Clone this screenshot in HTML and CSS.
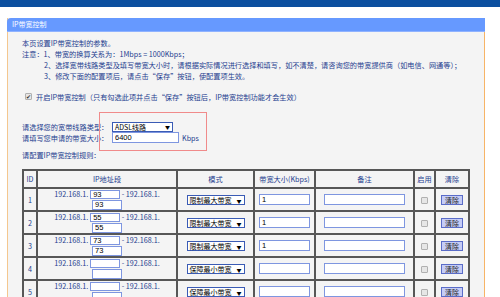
FILE: index.html
```html
<!DOCTYPE html>
<html lang="zh-CN">
<head>
    <meta charset="UTF-8">
    <meta name="viewport" content="width=device-width, initial-scale=1.0">
    <title>IP带宽控制</title>
    <link rel="stylesheet" href="styles.css">
</head>
<body>

    <div class="topbar"></div>

    <div class="panel">
        <div class="panel-title">IP带宽控制</div>

        <div class="panel-body">
            <div class="intro">
                <p>本页设置IP带宽控制的参数。</p>
                <p>注意：1、带宽的换算关系为：1Mbps = 1000Kbps；</p>
                <p class="indent">2、选择宽带线路类型及填写带宽大小时，请根据实际情况进行选择和填写，如不清楚，请咨询您的带宽提供商（如电信、网通等）；</p>
                <p class="indent">3、修改下面的配置项后，请点击“保存”按钮，使配置项生效。</p>
            </div>

            <div class="enable"><span class="cb on">✔</span>开启IP带宽控制（只有勾选此项并点击“保存”按钮后，IP带宽控制功能才会生效）</div>

            <div class="line-form">
                <div class="row">
                    <span class="lbl">请选择您的宽带线路类型：</span>
                    <span class="sel wide">ADSL线路<span class="arrow">▼</span></span>
                </div>
                <div class="row">
                    <span class="lbl">请填写您申请的带宽大小：</span>
                    <input class="txt total" value="6400">
                    <span class="unit">Kbps</span>
                </div>
                <!-- red marker drawn over the two fields -->
                <div class="mark"></div>
            </div>

            <p class="rules">请配置IP带宽控制规则：</p>

            <table>
                <colgroup>
                    <col class="c-id"><col class="c-ip"><col class="c-mode"><col class="c-bw">
                    <col class="c-note"><col class="c-on"><col class="c-clr">
                </colgroup>
                <tr>
                    <th>ID</th><th>IP地址段</th><th>模式</th><th>带宽大小(Kbps)</th><th>备注</th><th>启用</th><th>清除</th>
                </tr>
                <tr>
                    <td>1</td>
                    <td class="ip"><div>192.168.1.<input class="txt oct" value="93"> - 192.168.1.</div><input class="txt oct" value="93"></td>
                    <td><span class="sel mode">限制最大带宽<span class="arrow">▼</span></span></td>
                    <td><input class="txt bw" value="1"></td>
                    <td><input class="txt note" value=""></td>
                    <td><span class="cb"></span></td>
                    <td><button class="clear">清除</button></td>
                </tr>
                <tr>
                    <td>2</td>
                    <td class="ip"><div>192.168.1.<input class="txt oct" value="55"> - 192.168.1.</div><input class="txt oct" value="55"></td>
                    <td><span class="sel mode">限制最大带宽<span class="arrow">▼</span></span></td>
                    <td><input class="txt bw" value="1"></td>
                    <td><input class="txt note" value=""></td>
                    <td><span class="cb"></span></td>
                    <td><button class="clear">清除</button></td>
                </tr>
                <tr>
                    <td>3</td>
                    <td class="ip"><div>192.168.1.<input class="txt oct" value="73"> - 192.168.1.</div><input class="txt oct" value="73"></td>
                    <td><span class="sel mode">限制最大带宽<span class="arrow">▼</span></span></td>
                    <td><input class="txt bw" value="1"></td>
                    <td><input class="txt note" value=""></td>
                    <td><span class="cb"></span></td>
                    <td><button class="clear">清除</button></td>
                </tr>
                <tr>
                    <td>4</td>
                    <td class="ip"><div>192.168.1.<input class="txt oct" value=""> - 192.168.1.</div><input class="txt oct" value=""></td>
                    <td><span class="sel mode">保障最小带宽<span class="arrow">▼</span></span></td>
                    <td><input class="txt bw" value=""></td>
                    <td><input class="txt note" value=""></td>
                    <td><span class="cb"></span></td>
                    <td><button class="clear">清除</button></td>
                </tr>
                <tr>
                    <td>5</td>
                    <td class="ip"><div>192.168.1.<input class="txt oct" value=""> - 192.168.1.</div><input class="txt oct" value=""></td>
                    <td><span class="sel mode">保障最小带宽<span class="arrow">▼</span></span></td>
                    <td><input class="txt bw" value=""></td>
                    <td><input class="txt note" value=""></td>
                    <td><span class="cb"></span></td>
                    <td><button class="clear">清除</button></td>
                </tr>
            </table>
        </div>
    </div>

</body>
</html>
```

FILE: styles.css
```css
body {
    margin: 0;
    background-color: #fff;
    font-family: "Noto Sans CJK SC", sans-serif;
    font-size: 7.2px;
    color: #1d3d8f;
}

.topbar {
    height: 7px;
    background-color: #0b4f9f;
}

.panel {
    margin: 11px 0 0 7px;
    width: 476px;
    border-left: 1px solid #f4c78f;
    border-right: 1px solid #f7b466;
    background-color: #f4f4f4;
}

.panel-title {
    box-sizing: border-box;
    margin: 0 -1px;
    height: 14px;
    line-height: 13px;
    padding-left: 5px;
    background-color: #6699ff;
    border-bottom: 1px solid #8fb2ff;
    border-radius: 4px 0 0 0;
    color: #fff;
    font-size: 7px;
}

.panel-body {
    padding: 6px 0 20px 14px;
}

.intro p {
    margin: 0;
    line-height: 11px;
    white-space: nowrap;
}

.indent {
    padding-left: 22px;
}

.enable {
    display: flex;
    align-items: center;
    margin-top: 9px;
    height: 11px;
    padding-left: 3px;
    gap: 4px;
    white-space: nowrap;
}

/* checkbox look-alike */
.cb {
    display: inline-block;
    box-sizing: border-box;
    width: 7px;
    height: 7px;
    border: 1px solid #b0b0b0;
    border-radius: 1px;
    background-color: #e6e6e6;
    vertical-align: middle;
}

.cb.on {
    color: #333;
    font-size: 6px;
    line-height: 5px;
    text-align: center;
    overflow: hidden;
}

.line-form {
    position: relative;
    margin-top: 19px;
}

.row {
    display: flex;
    align-items: center;
    height: 11px;
}

.lbl {
    width: 90px;
    white-space: nowrap;
}

.sel {
    display: inline-flex;
    justify-content: space-between;
    align-items: center;
    box-sizing: border-box;
    height: 10px;
    padding: 0 2px;
    border: 1px solid #3a5bb5;
    background-color: #fff;
    color: #000;
    font-size: 7px;
    white-space: nowrap;
    vertical-align: middle;
}

.sel .arrow {
    font-size: 5px;
}

.sel.wide {
    width: 61px;
}

.sel.mode {
    width: 58px;
}

.txt {
    box-sizing: border-box;
    margin: 0;
    padding: 0 2px;
    border: 1px solid #7e96e0;
    background-color: #fff;
    color: #000;
    font-family: "Liberation Sans", sans-serif;
    font-size: 7.5px;
    vertical-align: middle;
    outline: none;
}

.txt.total {
    width: 67px;
    height: 11px;
}

.txt.oct {
    width: 30px;
    height: 9px;
}

.txt.bw {
    width: 51px;
    height: 11px;
}

.txt.note {
    width: 81px;
    height: 11px;
}

.unit {
    margin-left: 3px;
}

.mark {
    position: absolute;
    left: 77px;
    top: -9px;
    width: 108px;
    height: 39px;
    box-sizing: border-box;
    border: 1px solid #f08a8a;
}

.rules {
    margin: 7px 0 0;
    line-height: 11px;
}

table {
    margin-top: 8px;
    width: 446px;
    border-collapse: collapse;
    table-layout: fixed;
}

.c-id { width: 14px; }
.c-ip { width: 140px; }
.c-mode { width: 77px; }
.c-bw { width: 61px; }
.c-note { width: 99px; }
.c-on { width: 21px; }
.c-clr { width: 34px; }

th, td {
    border: 2px solid #575757;
    padding: 0;
    text-align: center;
    white-space: nowrap;
}

th {
    height: 16px;
    font-weight: normal;
}

td {
    height: 21px;
}

.ip div {
    height: 9px;
    line-height: 9px;
}

.ip div .txt {
    margin-left: 2px;
    vertical-align: top;
}

.ip > .txt {
    margin-top: 1px;
    height: 10px;
    vertical-align: top;
}

.clear {
    box-sizing: border-box;
    width: 22px;
    height: 10px;
    padding: 0;
    border: 1px solid #5a6cc8;
    background-color: #c5ccf6;
    color: #222;
    font-family: "Noto Sans CJK SC", sans-serif;
    font-size: 7px;
    line-height: 8px;
    vertical-align: middle;
}
```
